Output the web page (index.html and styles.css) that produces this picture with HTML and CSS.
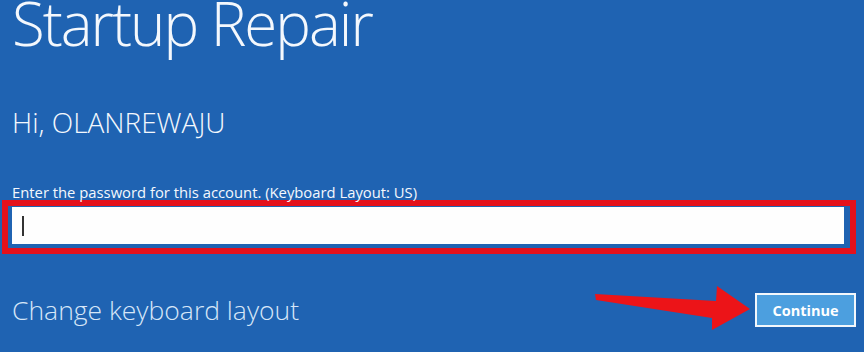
FILE: index.html
```
<!DOCTYPE html>
<html lang="en">
<head>
    <meta charset="UTF-8">
    <title>Startup Repair</title>
    <link rel="stylesheet" href="styles.css">
</head>
<body>
    <main class="screen">
        <h1 class="title">Startup Repair</h1>
        <p class="greeting">Hi, OLANREWAJU</p>

        <label class="prompt" for="pwd">Enter the password for this account. (Keyboard Layout: US)</label>
        <!-- red annotation box round the field -->
        <div class="highlight">
            <div class="field" id="pwd"><span class="caret"></span></div>
        </div>

        <div class="footer">
            <span class="link">Change keyboard layout</span>
            <button class="btn">Continue</button>
        </div>

        <svg class="arrow" width="864" height="352" viewBox="0 0 864 352">
            <polygon points="595,294 716,301 717,286 750,309 712,330 712,318 596,300" fill="#ec1418"/>
        </svg>
    </main>
</body>
</html>
```

FILE: styles.css
```
body {
    margin: 0;
    background-color: #1f63b2;
    color: #f4f8fd;
    font-family: "Open Sans", "Noto Sans", sans-serif;
}
.screen {
    position: relative;
    height: 352px;
    padding: 0 8px 0 12px;
    box-sizing: border-box;
    overflow: hidden;
}
.title {
    margin: -8px 0 0;
    font-size: 60px;
    font-weight: 300;
    line-height: 62px;
    letter-spacing: -2px;
}
.greeting {
    margin: 51px 0 0;
    font-size: 28px;
    font-weight: 300;
    line-height: 34px;
}
.prompt {
    display: block;
    margin-top: 45px;
    font-size: 14.8px;
    line-height: 16px;
}
.highlight {
    margin: 0 0 0 -10px;
    width: 854px;
    box-sizing: border-box;
    border: 6px solid #e4111b;
    padding: 1px 6px 4px 4px;
}
.field {
    height: 37px;
    background: #fefefe;
    display: flex;
    align-items: center;
    padding-left: 10px;
}
.caret {
    width: 2px;
    height: 20px;
    background: #333;
}
.footer {
    display: flex;
    justify-content: space-between;
    align-items: center;
    margin-top: 38px;
}
.link {
    font-size: 26.5px;
    font-weight: 300;
    color: #d6e6f8;
}
.btn {
    width: 101px;
    height: 34px;
    background: #4c9fdf;
    border: 2px solid #f2f7fc;
    color: #fff;
    font-family: "Open Sans", sans-serif;
    font-weight: 700;
    font-size: 14.5px;
    padding: 0;
}
.arrow {
    position: absolute;
    left: 0;
    top: 0;
    pointer-events: none;
}
```
